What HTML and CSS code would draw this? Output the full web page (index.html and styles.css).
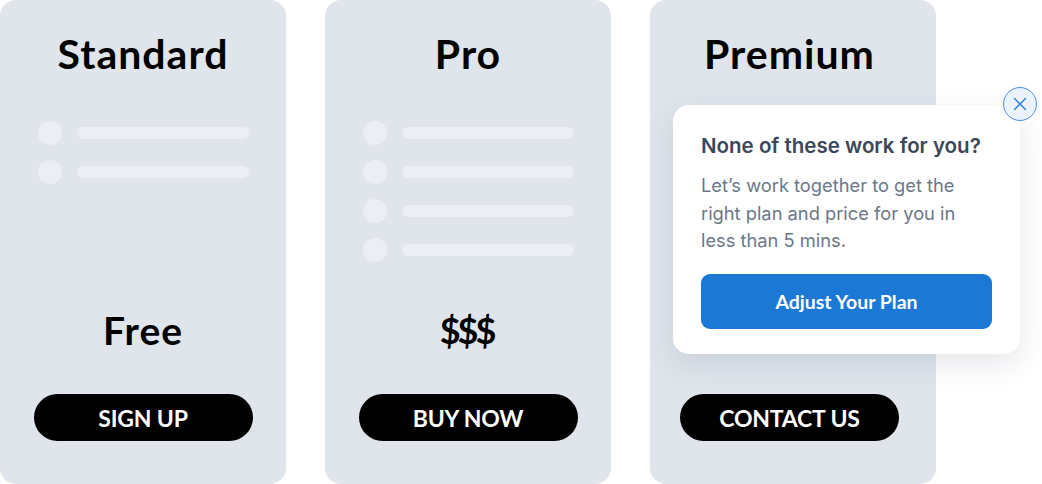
FILE: index.html
```html
<!DOCTYPE html>
<html>
<head>
<meta charset="utf-8">
<link rel="stylesheet" href="styles.css">
</head>
<body>
<div class="plans">
  <div class="card">
    <h2 class="title">Standard</h2>
    <ul class="features">
      <li><span class="dot"></span><span class="bar"></span></li>
      <li><span class="dot"></span><span class="bar"></span></li>
    </ul>
    <div class="price">Free</div>
    <button class="cta">Sign up</button>
  </div>
  <div class="card">
    <h2 class="title">Pro</h2>
    <ul class="features">
      <li><span class="dot"></span><span class="bar"></span></li>
      <li><span class="dot"></span><span class="bar"></span></li>
      <li><span class="dot"></span><span class="bar"></span></li>
      <li><span class="dot"></span><span class="bar"></span></li>
    </ul>
    <div class="price price-dollars">$$$</div>
    <button class="cta">Buy now</button>
  </div>
  <div class="card card-premium">
    <h2 class="title">Premium</h2>
    <ul class="features"></ul>
    <div class="price"></div>
    <button class="cta">Contact us</button>
    <div class="popup">
      <button class="close" aria-label="Close">
        <svg width="14" height="14" viewBox="0 0 14 14"><path d="M1.5 1.5 L12.5 12.5 M12.5 1.5 L1.5 12.5" stroke="#2f7de0" stroke-width="1.4" stroke-linecap="round" fill="none"/></svg>
      </button>
      <h3 class="popup-title">None of these work for you?</h3>
      <p class="popup-text">Let’s work together to get the right plan and price for you in less than 5 mins.</p>
      <button class="adjust">Adjust Your Plan</button>
    </div>
  </div>
</div>
</body>
</html>
```
FILE: styles.css
```css
* { box-sizing: border-box; }
html, body { margin: 0; padding: 0; background: #ffffff; }
body { width: 1042px; height: 484px; overflow: hidden; font-family: "Lato", "Noto Sans", sans-serif; }

.plans { display: flex; gap: 39px; height: 484px; }

.card {
  position: relative;
  width: 286px;
  height: 484px;
  background: #e0e5ec;
  border-radius: 16px;
  display: flex;
  flex-direction: column;
  align-items: center;
}
.card-premium { padding-right: 7px; }

.title {
  margin: 31px 0 0;
  font-size: 41px;
  line-height: 46px;
  font-weight: 700;
  color: #000;
  letter-spacing: 1px;
}

.features {
  list-style: none;
  margin: 44px 0 0;
  padding: 0;
  width: 211px;
  display: flex;
  flex-direction: column;
  gap: 15px;
}
.features li { display: flex; align-items: center; gap: 15px; height: 24px; }
.dot { width: 24px; height: 24px; border-radius: 50%; background: #ebeff3; }
.bar { width: 172px; height: 12px; border-radius: 6px; background: #ebeff3; }

.price {
  margin-top: auto;
  font-size: 39px;
  line-height: 44px;
  font-weight: 700;
  color: #000;
  min-height: 44px;
  letter-spacing: 1px;
}
.price-dollars { font-size: 36px; letter-spacing: -3px; padding-right: 3px; }

.cta {
  margin: 42px 0 43px;
  width: 219px;
  height: 47px;
  border: 0;
  border-radius: 24px;
  background: #000;
  color: #fff;
  font-family: "Lato", "Noto Sans", sans-serif;
  font-size: 23px;
  font-weight: 700;
  text-transform: uppercase;
  letter-spacing: -0.2px;
}

.popup {
  position: absolute;
  left: 23px;
  top: 105px;
  width: 347px;
  height: 249px;
  background: #fff;
  border-radius: 16px;
  box-shadow: 0 10px 30px rgba(40, 55, 80, 0.12);
  padding: 29px 28px 0;
  font-family: "Inter", sans-serif;
}
.close {
  position: absolute;
  right: -17px;
  top: -18px;
  width: 34px;
  height: 34px;
  border-radius: 50%;
  border: 1px solid #4a8ee6;
  background: #ebf3fe;
  display: flex;
  align-items: center;
  justify-content: center;
  padding: 0;
}
.popup-title {
  margin: 0;
  font-size: 20.5px;
  line-height: 24px;
  font-weight: 600;
  color: #3b475a;
}
.popup-text {
  margin: 14px 0 0;
  font-size: 18.3px;
  line-height: 27.5px;
  color: #6b778a;
}
.adjust {
  margin-top: 19px;
  width: 291px;
  height: 55px;
  border: 0;
  border-radius: 9px;
  background: #1b78d4;
  color: #fff;
  font-family: "Lato", sans-serif;
  font-size: 19.5px;
  font-weight: 700;
}
```
